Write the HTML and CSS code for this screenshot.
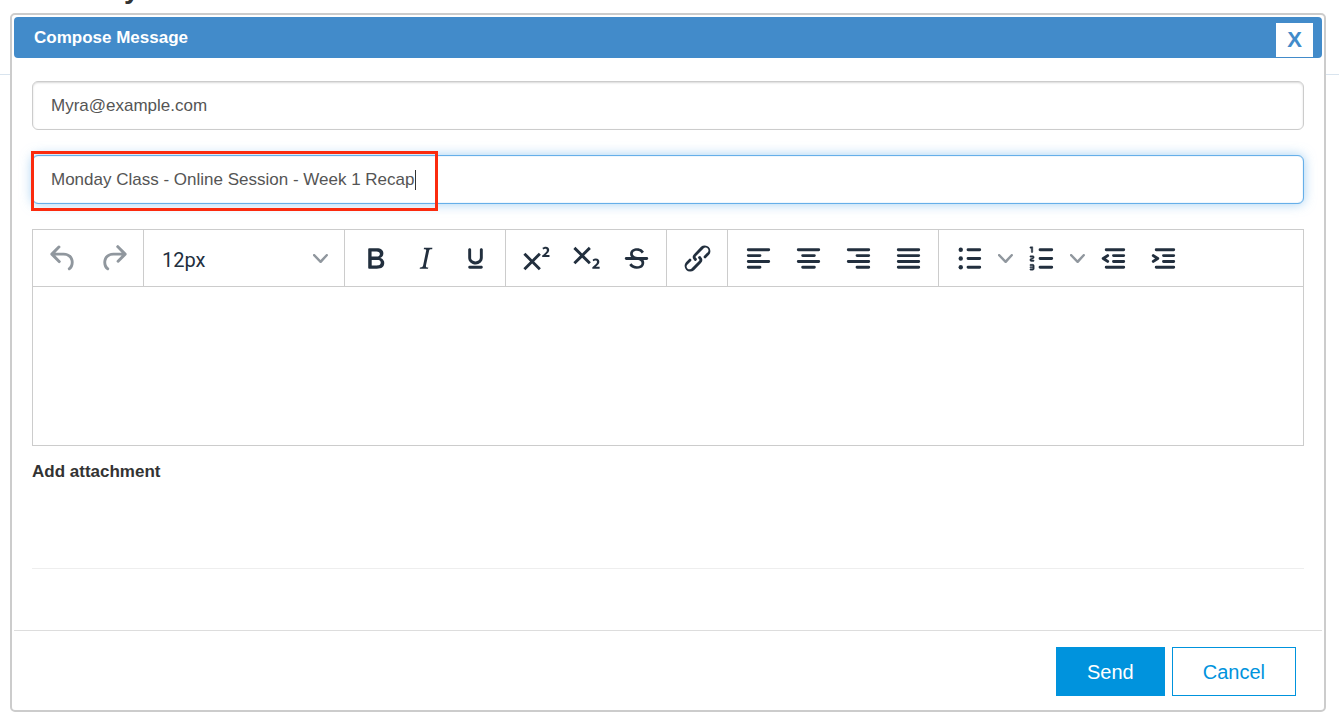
FILE: index.html
```html
<!DOCTYPE html>
<html lang="en">
<head>
<meta charset="utf-8">
<title>Compose Message</title>
<link rel="stylesheet" href="styles.css">
</head>
<body>
<div class="page-behind" aria-hidden="true"><div class="page-title">y</div></div>
<form class="modal" role="dialog" aria-labelledby="modal-title">
  <header class="modal-header">
    <h1 class="modal-title" id="modal-title">Compose Message</h1>
    <button class="close" type="button" aria-label="Close">X</button>
  </header>
  <div class="modal-body">
    <input class="field" type="email" aria-label="To" value="Myra@example.com">
    <div class="subject">
      <input class="field field-active" type="text" aria-label="Subject" value="Monday Class - Online Session - Week 1 Recap">
      <span class="caret"></span>
      <span class="highlight"></span>
    </div>
    <div class="editor">
      <div class="toolbar" role="toolbar" aria-label="Formatting">
        <div class="group">
          <button class="tool muted" type="button" aria-label="Undo"><svg class="icon" viewBox="0 0 24 24"><path d="M6.4 8H12c3.7 0 6.2 2 6.8 5.1.6 2.7-.4 5.6-2.3 6.8a1 1 0 0 1-1-1.8c1.1-.6 1.8-2.7 1.4-4.6-.5-2.1-2.1-3.5-4.9-3.5H6.4l3.3 3.3a1 1 0 1 1-1.4 1.4l-5-5a1 1 0 0 1 0-1.4l5-5a1 1 0 0 1 1.4 1.4L6.4 8z"/></svg></button>
          <button class="tool muted" type="button" aria-label="Redo"><svg class="icon" viewBox="0 0 24 24"><path d="M17.6 10H12c-2.8 0-4.4 1.4-4.9 3.5-.4 2 .3 4 1.4 4.6a1 1 0 1 1-1 1.8c-2-1.2-2.9-4.1-2.3-6.8.6-3 3-5.1 6.8-5.1h5.6l-3.3-3.3a1 1 0 1 1 1.4-1.4l5 5a1 1 0 0 1 0 1.4l-5 5a1 1 0 0 1-1.4-1.4l3.3-3.3z"/></svg></button>
        </div>
        <div class="group size-group">
          <select class="size" aria-label="Font size"><option>12px</option></select>
          <svg class="chevron" viewBox="0 0 10 10"><path d="M8.7 2.2c.3-.3.8-.3 1 0 .4.4.4.9 0 1.2L5.7 7.8c-.3.3-.9.3-1.2 0L.2 3.4a.8.8 0 0 1 0-1.2c.3-.3.8-.3 1.1 0L5 6l3.7-3.8z"/></svg>
        </div>
        <div class="group">
          <button class="tool" type="button" aria-label="Bold"><svg class="icon" viewBox="0 0 24 24"><path d="M7.8 19c-.3 0-.5 0-.6-.2l-.2-.5V5.7c0-.2 0-.4.2-.5l.6-.2h5c1.5 0 2.7.3 3.5 1 .7.6 1.1 1.4 1.1 2.5a3 3 0 0 1-.6 1.9c-.4.6-1 1-1.6 1.2.4.1.9.3 1.3.6s.8.7 1 1.2c.4.4.5 1 .5 1.6 0 1.3-.4 2.3-1.3 3-.8.7-2.1 1-3.8 1H7.8zm5-8.3c.6 0 1.2-.1 1.6-.5.4-.3.6-.7.6-1.3 0-1.1-.8-1.7-2.3-1.7H9.3v3.5h3.4zm.5 6c.7 0 1.3-.1 1.7-.4.4-.4.6-.9.6-1.5s-.2-1-.7-1.4c-.4-.3-1-.4-2-.4H9.4v3.8h4z"/></svg></button>
          <button class="tool" type="button" aria-label="Italic"><svg class="icon" viewBox="0 0 24 24"><path d="M16.7 4.7l-.1.9h-.3c-.6 0-1 0-1.4.3-.3.3-.4.6-.5 1.1l-2.1 9.8v.6c0 .5.4.8 1.4.8h.2l-.2.8H8l.2-.8h.2c1.1 0 1.8-.5 2-1.5l2-9.8.1-.5c0-.6-.4-.8-1.4-.8h-.3l.2-.9h5.8z"/></svg></button>
          <button class="tool" type="button" aria-label="Underline"><svg class="icon" viewBox="0 0 24 24"><path d="M16 5c.6 0 1 .4 1 1v5.5a4 4 0 0 1-.4 1.8l-1 1.4a5.3 5.3 0 0 1-5.5 1 5 5 0 0 1-1.6-1c-.5-.4-.8-.9-1.1-1.4a4 4 0 0 1-.4-1.8V6c0-.6.4-1 1-1s1 .4 1 1v5.5c0 .3 0 .6.2 1l.6.7a3.3 3.3 0 0 0 2.2.8 3.4 3.4 0 0 0 2.2-.8c.3-.2.4-.5.6-.8l.2-.9V6c0-.6.4-1 1-1zM8 17h8c.6 0 1 .4 1 1s-.4 1-1 1H8a1 1 0 0 1 0-2z"/></svg></button>
        </div>
        <div class="group">
          <button class="tool" type="button" aria-label="Superscript"><svg class="icon" viewBox="0 0 24 24"><path d="M15 9.4L10.4 14l4.6 4.6-1.4 1.4L9 15.4 4.4 20 3 18.6 7.6 14 3 9.4 4.4 8 9 12.6 13.6 8 15 9.4zm5.9 1.6h-5v-1l1-.8 1.7-1.6c.3-.5.5-.9.5-1.3 0-.3 0-.5-.2-.7-.2-.2-.5-.3-.9-.3l-.8.2-.7.4-.4-1.2c.2-.2.5-.4 1-.5.3-.2.8-.2 1.2-.2.8 0 1.4.2 1.8.6.4.4.6 1 .6 1.6 0 .5-.2 1-.5 1.5l-1.3 1.4-.6.5h2.6V11z"/></svg></button>
          <button class="tool" type="button" aria-label="Subscript"><svg class="icon" viewBox="0 0 24 24"><path d="M10.4 10l4.6 4.6-1.4 1.4L9 11.4 4.4 16 3 14.6 7.6 10 3 5.4 4.4 4 9 8.6 13.6 4 15 5.4 10.4 10zM21 19h-5v-1l1-.8 1.7-1.6c.3-.4.5-.8.5-1.2 0-.3 0-.6-.2-.7-.2-.2-.5-.3-.9-.3a2 2 0 0 0-.8.2l-.7.3-.4-1.1 1-.6 1.2-.2c.8 0 1.4.3 1.8.7.4.4.6.9.6 1.5s-.2 1.1-.5 1.6a8 8 0 0 1-1.3 1.3l-.6.6h2.6V19z"/></svg></button>
          <button class="tool" type="button" aria-label="Strikethrough"><svg class="icon" viewBox="0 0 24 24"><path d="M15.6 8.5c-.5-.7-1-1.1-1.3-1.3-.6-.4-1.3-.6-2-.6-2.7 0-2.8 1.7-2.8 2.1 0 1.6 1.8 2 3.2 2.3 4.4.9 4.6 2.8 4.6 3.9 0 1.4-.7 4.1-5 4.1A6.2 6.2 0 0 1 7 16.4l1.5-1.1c.4.6 1.6 2 3.7 2 1.6 0 2.5-.4 3-1.2.4-.8.3-2-.8-2.6-.7-.4-1.6-.7-2.9-1-1-.2-3.9-.8-3.9-3.6C7.6 6 10.3 5 12.4 5c2.9 0 4.2 1.6 4.7 2.4l-1.5 1.1z"/><path d="M5 11h14a1 1 0 0 1 0 2H5a1 1 0 0 1 0-2z"/></svg></button>
        </div>
        <div class="group">
          <button class="tool" type="button" aria-label="Link"><svg class="icon" viewBox="0 0 24 24"><path d="M6.2 12.3a1 1 0 0 1 1.4 1.4l-2.1 2a2 2 0 1 0 2.7 2.8l4.8-4.8a1 1 0 0 0 0-1.4 1 1 0 1 1 1.4-1.3 2.9 2.9 0 0 1 0 4L9.6 20a3.9 3.9 0 0 1-5.5-5.5l2-2zm11.6-.6a1 1 0 0 1-1.4-1.4l2-2a2 2 0 1 0-2.6-2.8L11 10.3a1 1 0 0 0 0 1.4A1 1 0 1 1 9.6 13a2.9 2.9 0 0 1 0-4L14.4 4a3.9 3.9 0 0 1 5.5 5.5l-2 2z"/></svg></button>
        </div>
        <div class="group">
          <button class="tool" type="button" aria-label="Align left"><svg class="icon lines" viewBox="0 0 24 24"><path d="M5 6h14M5 10h8M5 14h14M5 18h8"/></svg></button>
          <button class="tool" type="button" aria-label="Align center"><svg class="icon lines" viewBox="0 0 24 24"><path d="M5 6h14M8 10h8M5 14h14M8 18h8"/></svg></button>
          <button class="tool" type="button" aria-label="Align right"><svg class="icon lines" viewBox="0 0 24 24"><path d="M5 6h14M11 10h8M5 14h14M11 18h8"/></svg></button>
          <button class="tool" type="button" aria-label="Justify"><svg class="icon lines" viewBox="0 0 24 24"><path d="M5 6h14M5 10h14M5 14h14M5 18h14"/></svg></button>
        </div>
        <div class="group">
          <button class="tool" type="button" aria-label="Bullet list"><svg class="icon" viewBox="0 0 24 24"><path class="lines" d="M11 6h8M11 12h8M11 18h8"/><circle cx="6" cy="6" r="1.5"/><circle cx="6" cy="12" r="1.5"/><circle cx="6" cy="18" r="1.5"/></svg></button>
          <button class="tool tool-more" type="button" aria-label="Bullet list styles"><svg class="chevron" viewBox="0 0 10 10"><path d="M8.7 2.2c.3-.3.8-.3 1 0 .4.4.4.9 0 1.2L5.7 7.8c-.3.3-.9.3-1.2 0L.2 3.4a.8.8 0 0 1 0-1.2c.3-.3.8-.3 1.1 0L5 6l3.7-3.8z"/></svg></button>
          <button class="tool" type="button" aria-label="Numbered list"><svg class="icon" viewBox="0 0 24 24"><path class="lines" d="M11 6h8M11 12h8M11 18h8"/><path d="M6 4v3.5c0 .3-.2.5-.5.5a.5.5 0 0 1-.5-.5V5h-.5a.5.5 0 0 1 0-1H6zm-1 8.8l.2.2h1.3c.3 0 .5.2.5.5s-.2.5-.5.5H4.9a1 1 0 0 1-.9-1V13c0-.4.3-.8.6-1l1.2-.4.2-.3a.2.2 0 0 0-.2-.2H4.5a.5.5 0 0 1-.5-.5c0-.3.2-.5.5-.5h1.6c.5 0 .9.4.9 1v.1c0 .4-.3.8-.6 1l-1.2.4-.2.3zM7 17v2c0 .6-.4 1-1 1H4.5a.5.5 0 0 1 0-1h1.2c.2 0 .3-.1.3-.3 0-.2-.1-.3-.3-.3H4.4a.4.4 0 1 1 0-.8h1.3c.2 0 .3-.1.3-.3 0-.2-.1-.3-.3-.3H4.5a.5.5 0 1 1 0-1H6c.6 0 1 .4 1 1z" stroke="currentColor" stroke-width=".3"/></svg></button>
          <button class="tool tool-more" type="button" aria-label="Numbered list styles"><svg class="chevron" viewBox="0 0 10 10"><path d="M8.7 2.2c.3-.3.8-.3 1 0 .4.4.4.9 0 1.2L5.7 7.8c-.3.3-.9.3-1.2 0L.2 3.4a.8.8 0 0 1 0-1.2c.3-.3.8-.3 1.1 0L5 6l3.7-3.8z"/></svg></button>
          <button class="tool" type="button" aria-label="Decrease indent"><svg class="icon" viewBox="0 0 24 24"><path class="lines" d="M7 6h12M12 10h7M12 14h7M7 18h12"/><path d="M8.6 13.2a1 1 0 0 1-1.2 1.6l-3-2a1 1 0 0 1 0-1.6l3-2a1 1 0 0 1 1.2 1.6L6.8 12l1.8 1.2z"/></svg></button>
          <button class="tool" type="button" aria-label="Increase indent"><svg class="icon" viewBox="0 0 24 24"><path class="lines" d="M7 6h12M12 10h7M12 14h7M7 18h12"/><path d="M4.4 13.2L6.2 12l-1.8-1.2a1 1 0 0 1 1.2-1.6l3 2a1 1 0 0 1 0 1.6l-3 2a1 1 0 1 1-1.2-1.6z"/></svg></button>
        </div>
      </div>
      <textarea class="message" aria-label="Message"></textarea>
    </div>
    <h2 class="attach">Add attachment</h2>
    <hr class="rule">
  </div>
  <footer class="modal-footer">
    <button class="btn btn-primary" type="button">Send</button>
    <button class="btn" type="button">Cancel</button>
  </footer>
</form>
</body>
</html>
```

FILE: styles.css
```css
* { box-sizing: border-box; }

body {
  margin: 0;
  padding: 13px 13px 16px 10px;
  background: #fff;
  color: #333;
  font-family: "Liberation Sans", Arial, sans-serif;
  font-size: 17px;
  line-height: 24px;
}

button, input, select, textarea { font: inherit; }

/* Page that the dialog covers */
.page-behind {
  position: absolute;
  inset: 0 0 auto 0;
  height: 75px;
  padding-left: 124px;
  border-bottom: 1px solid #d9e4ee;
  overflow: hidden;
}
.page-title {
  margin-top: -27px;
  font-size: 28px;
  font-weight: bold;
  line-height: 32px;
}

.modal {
  position: relative;
  padding: 2px;
  border: 2px solid #ccc;
  border-radius: 5px;
  background: #fff;
}
.modal-header {
  display: flex;
  align-items: center;
  justify-content: space-between;
  padding: 6px 9px 1px 20px;
  border-radius: 4px;
  background: #428bca;
}
.modal-title {
  margin: 0;
  padding-bottom: 5px;
  color: #fff;
  font-size: 17px;
}
.close {
  width: 37px;
  height: 34px;
  padding: 0;
  border: 0;
  background: #fff;
  color: #428bca;
  font-size: 22px;
  font-weight: bold;
}

.modal-body {
  display: flex;
  flex-direction: column;
  padding: 23px 18px 61px;
}
.field {
  display: block;
  width: 100%;
  height: 49px;
  margin-bottom: 25px;
  padding: 0 18px;
  border: 1px solid #ccc;
  border-radius: 6px;
  outline: 0;
  background: #fff;
  box-shadow: inset 0 1px 2px rgba(0, 0, 0, .15);
  color: #555;
}
.subject { position: relative; }
.field-active {
  border-color: #66afe9;
  box-shadow: inset 0 0 1px #66afe9, 0 0 12px rgba(102, 175, 233, .6);
}
.caret {
  position: absolute;
  top: 15px;
  left: 383px;
  width: 1px;
  height: 20px;
  background: #333;
}
.highlight {
  position: absolute;
  top: -4px;
  left: -1px;
  width: 407px;
  height: 60px;
  border: 3px solid #fb2b0e;
  pointer-events: none;
}

.editor { border: 1px solid #ccc; }
.toolbar {
  display: flex;
  border-bottom: 1px solid #ccc;
}
.group {
  display: flex;
  align-items: center;
  height: 56px;
  padding: 0 5px;
  border-right: 1px solid #ccc;
}
.group:last-child { border-right: 0; }
.tool {
  display: flex;
  align-items: center;
  justify-content: center;
  width: 50px;
  height: 49px;
  padding: 0;
  border: 0;
  background: none;
  color: #222f3e;
}
.tool-more { width: 22px; }
.muted { color: #90979e; }
.icon {
  width: 35px;
  height: 35px;
  fill: currentColor;
}
.lines {
  fill: none;
  stroke: currentColor;
  stroke-width: 2;
  stroke-linecap: round;
}
.chevron {
  flex: none;
  width: 15px;
  height: 15px;
  fill: #90979e;
  pointer-events: none;
}
.size-group {
  position: relative;
  width: 201px;
  padding: 0;
}
.size {
  appearance: none;
  width: 100%;
  height: 49px;
  padding: 4px 18px 0;
  border: 0;
  background: none;
  color: #222f3e;
  font-family: Roboto, sans-serif;
  font-size: 20px;
}
.size-group .chevron {
  position: absolute;
  right: 16px;
}
.message {
  display: block;
  width: 100%;
  height: 158px;
  padding: 16px;
  border: 0;
  outline: 0;
  resize: none;
}

.attach {
  margin: 14px 0 84px;
  font-size: 17px;
}
.rule {
  width: 100%;
  margin: 0;
  border: 0;
  border-top: 1px solid #eee;
}

.modal-footer {
  display: flex;
  justify-content: flex-end;
  gap: 7px;
  padding: 16px 26px 12px;
  border-top: 1px solid #ddd;
}
.btn {
  height: 49px;
  padding: 0 30px;
  border: 1px solid #0093dd;
  background: #fff;
  color: #0093dd;
  font-size: 20px;
}
.btn-primary {
  background: #0093dd;
  color: #fff;
}
```
